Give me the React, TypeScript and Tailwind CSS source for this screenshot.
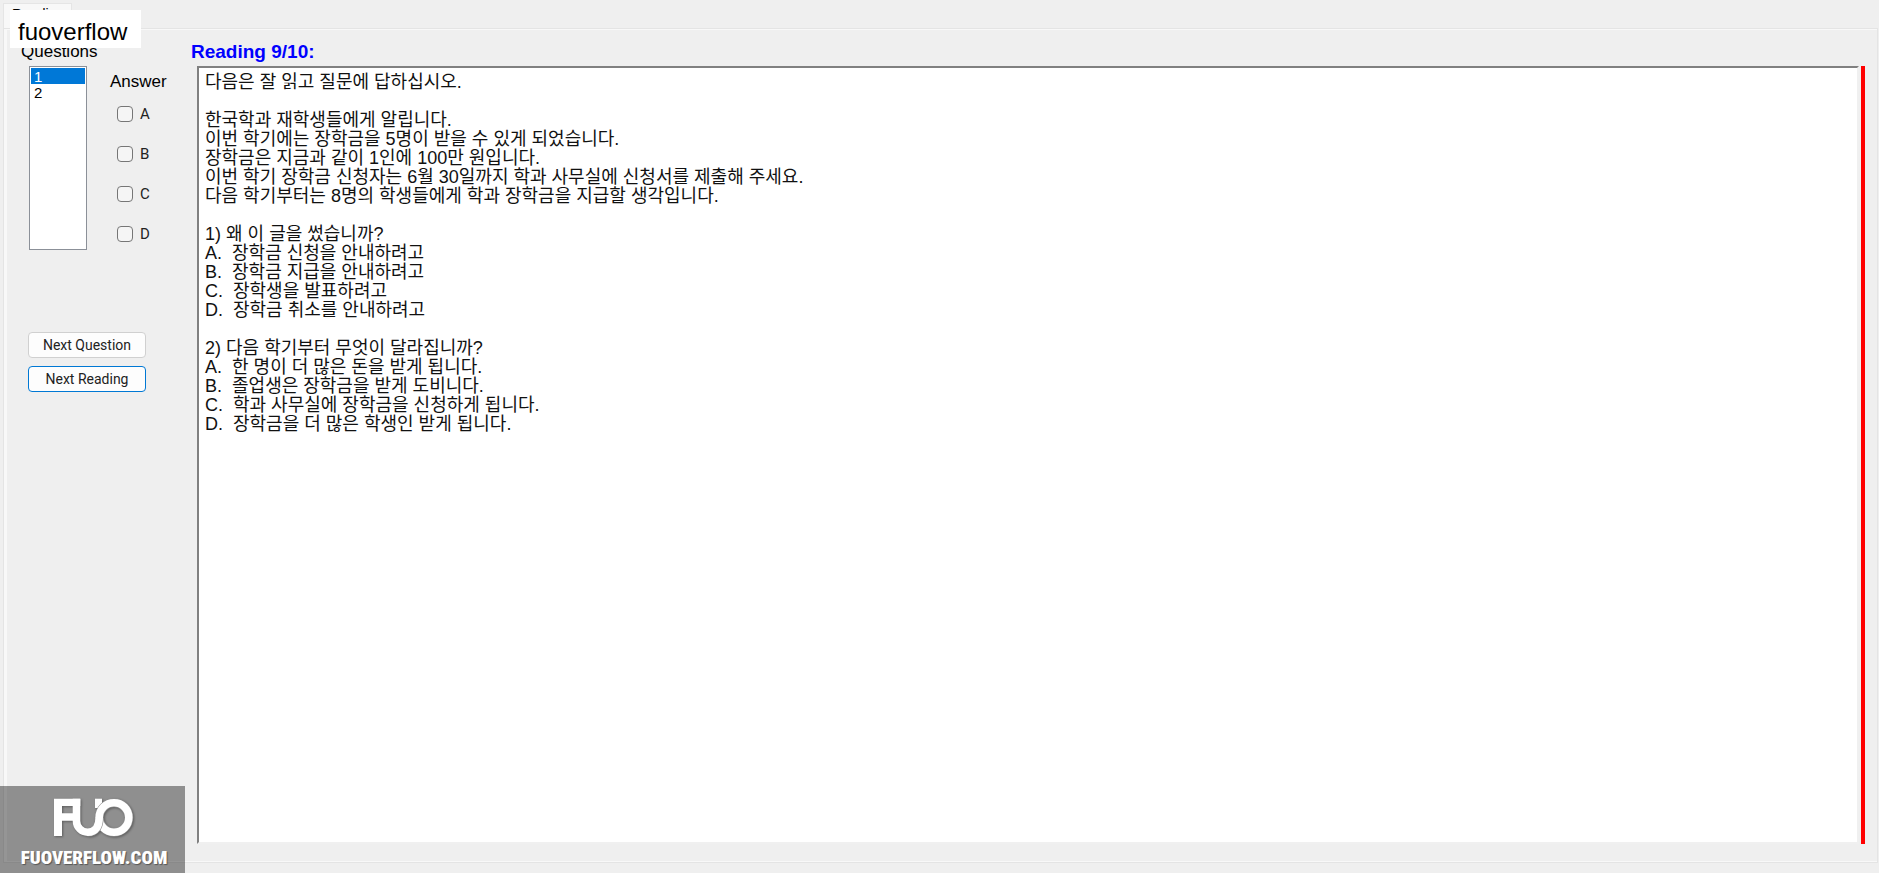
import { useState } from "react";

const passage = `다음은 잘 읽고 질문에 답하십시오.

한국학과 재학생들에게 알립니다.
이번 학기에는 장학금을 5명이 받을 수 있게 되었습니다.
장학금은 지금과 같이 1인에 100만 원입니다.
이번 학기 장학금 신청자는 6월 30일까지 학과 사무실에 신청서를 제출해 주세요.
다음 학기부터는 8명의 학생들에게 학과 장학금을 지급할 생각입니다.

1) 왜 이 글을 썼습니까?
A.  장학금 신청을 안내하려고
B.  장학금 지급을 안내하려고
C.  장학생을 발표하려고
D.  장학금 취소를 안내하려고

2) 다음 학기부터 무엇이 달라집니까?
A.  한 명이 더 많은 돈을 받게 됩니다.
B.  졸업생은 장학금을 받게 도비니다.
C.  학과 사무실에 장학금을 신청하게 됩니다.
D.  장학금을 더 많은 학생인 받게 됩니다.`;

function AnswerBox({ letter }: { letter: string }) {
  return (
    <label className="flex h-10 items-center gap-[7px] pl-[7px] font-[Roboto,sans-serif] text-[15px] text-[#222]">
      <input
        type="checkbox"
        className="size-4 appearance-none rounded-[4px] border border-[#767676] bg-[#f5f5f5] checked:bg-[#0078d7]"
      />
      {letter}
    </label>
  );
}

function Logo() {
  return (
    <svg viewBox="0 0 80 40" className="h-10 w-20 drop-shadow-[1px_1px_1px_rgba(0,0,0,0.35)]" fill="none" aria-hidden="true">
      <path d="M0 0.700H26.300V8H8V15.300H19V22.700H8V38H0Z" fill="#fff" />
      <path d="M41 0.700H48V10H41Z" fill="#fff" />
      <circle cx="60" cy="19.500" r="14.800" stroke="#8f8f8f" strokeWidth="8.800" />
      <circle cx="60" cy="19.500" r="14.800" stroke="#fff" strokeWidth="7.600" />
      <path d="M45.200 20C45.200 28 42 34.200 33.500 34.200" stroke="#8f8f8f" strokeWidth="8.800" />
      <path d="M22.500 0.700V23A11.200 11.200 0 0 0 33.700 34.200C42 34.200 45.200 28 45.200 19.500" stroke="#fff" strokeWidth="7.600" />
    </svg>
  );
}

export default function App() {
  const [question, setQuestion] = useState("1");
  return (
    <div className="relative flex min-h-screen flex-col bg-[#efefef] pr-px pb-[10px] pl-[3px] font-['Liberation_Sans',Arial,sans-serif] text-black">
      <div className="flex pt-[3px]" role="tablist">
        <button
          role="tab"
          aria-selected="true"
          className="flex h-[25px] w-[69px] items-start border border-b-0 border-[#e5e5e5] bg-[#f8f8f8] pt-[2px] pl-2 text-left text-sm leading-4"
        >
          Reading
        </button>
      </div>

      <main className="flex flex-1 flex-col border border-[#e4e4e4]">
        <div className="grid flex-1 grid-cols-[184px_minmax(0,1fr)] grid-rows-[auto_minmax(0,1fr)] border-y border-l-3 border-[#f8f8f8] pr-3 pb-[17px]">
          <label htmlFor="questions" className="pt-[10px] pb-[2px] pl-[14px] text-[17px] leading-6">
            Questions
          </label>
          <h1 className="pt-[10px] pb-[2px] text-[19px] leading-6 font-bold text-[#0000ff]">Reading 9/10:</h1>

          <div className="pl-[21px]">
            <div className="flex items-start gap-[23px] pl-px">
              <select
                id="questions"
                size={2}
                value={question}
                onChange={(e) => setQuestion(e.target.value)}
                className="h-[184px] w-[58px] appearance-none overflow-hidden border border-[#8b9098] bg-white p-px text-base leading-4 outline-none"
              >
                {["1", "2"].map((n) => (
                  <option
                    key={n}
                    value={n}
                    className="h-4 min-h-0 px-[3px] py-0 text-[15px] leading-4 checked:bg-[linear-gradient(#0078d7,#0078d7)] checked:[-webkit-text-fill-color:white]"
                  >
                    {n}
                  </option>
                ))}
              </select>
              <fieldset>
                <legend className="pt-1 text-[17px] leading-6">Answer</legend>
                {["A", "B", "C", "D"].map((l) => (
                  <AnswerBox key={l} letter={l} />
                ))}
              </fieldset>
            </div>
            <div className="mt-[78px] flex w-[118px] flex-col gap-2 font-[Roboto,sans-serif] text-sm text-[#222]">
              <button className="h-[26px] rounded-[4px] border border-[#d0d0d0] bg-[#fdfdfd]">Next Question</button>
              <button className="h-[26px] rounded-[4px] border border-[#0078d4] bg-[#fdfdfd]">Next Reading</button>
            </div>
          </div>

          <div className="ml-[6px] flex gap-px border-r-4 border-[#ff0000]">
            <article className="flex-1 border-2 border-t-[#808080] border-r-[#f0f0f0] border-b-[#f0f0f0] border-l-[#808080] bg-white px-[6px] py-[5px] font-['Liberation_Sans','Noto_Sans_CJK_KR',sans-serif] text-lg leading-[19px] whitespace-pre-wrap text-[#111]">
              {passage}
            </article>
            <span className="w-px" />
          </div>
        </div>
      </main>

      <div className="absolute top-[10px] left-[10px] flex h-[38px] w-[131px] items-center bg-white pt-[5px] pl-2 text-2xl leading-none">
        fuoverflow
      </div>

      <a
        href="#fuoverflow"
        className="absolute bottom-0 left-0 flex h-[87px] w-[185px] flex-col items-center bg-black/40 pt-3 pl-[3px] text-white"
      >
        <Logo />
        <span className="mt-2 font-['Roboto_Condensed','Liberation_Sans',sans-serif] text-[19px] leading-6 font-black text-shadow-[1px_1px_1px_rgba(0,0,0,0.4)]">
          FUOVERFLOW.COM
        </span>
      </a>
    </div>
  );
}
